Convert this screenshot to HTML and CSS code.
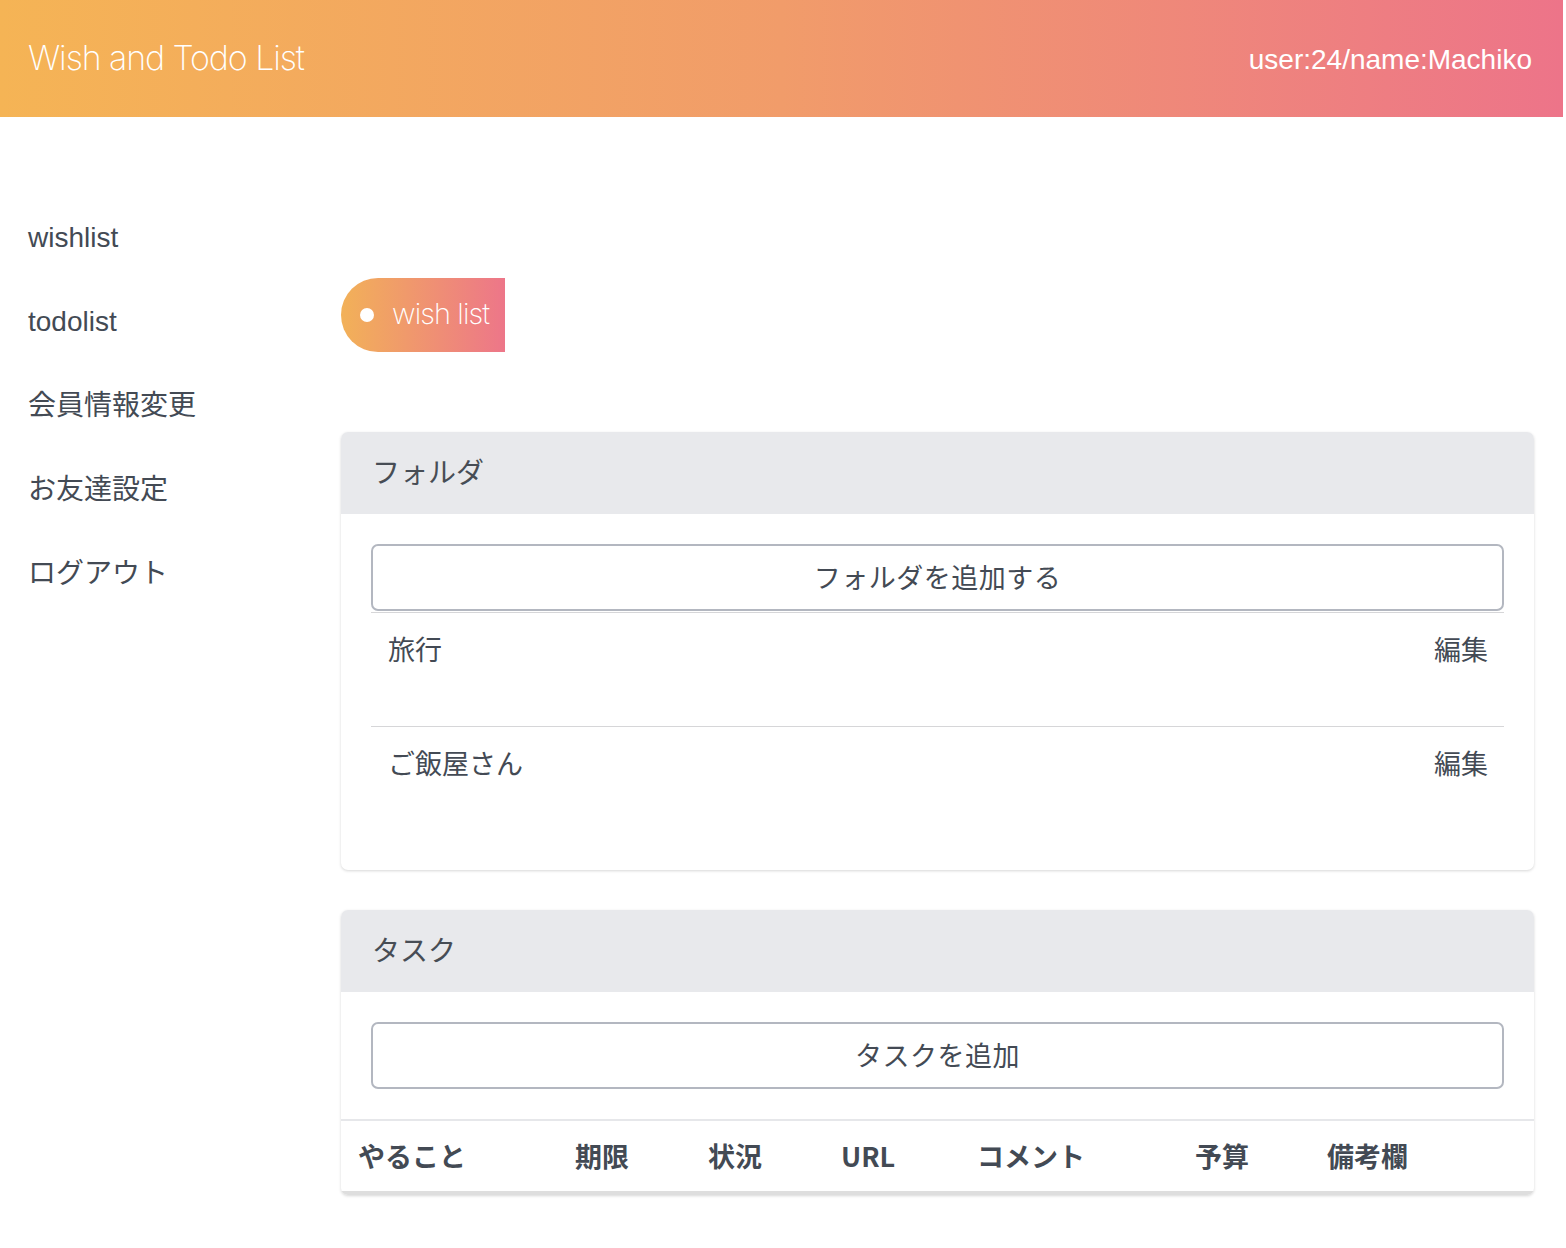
FILE: index.html
```html
<!DOCTYPE html>
<html lang="ja">
<head>
<meta charset="utf-8">
<title>Wish and Todo List</title>
<link rel="stylesheet" href="styles.css">
</head>
<body>
<div class="page">
  <header class="topbar">
    <h1 class="brand">Wish and Todo List</h1>
    <div class="user">user:24/name:Machiko</div>
  </header>
  <div class="layout">
    <nav class="sidebar">
      <a class="nav-item" href="#">wishlist</a>
      <a class="nav-item" href="#">todolist</a>
      <a class="nav-item" href="#">会員情報変更</a>
      <a class="nav-item" href="#">お友達設定</a>
      <a class="nav-item" href="#">ログアウト</a>
    </nav>
    <main class="main">
      <div class="pill"><span class="pill-dot"></span><span class="pill-text">wish list</span></div>

      <section class="card card-folders">
        <div class="card-header">フォルダ</div>
        <div class="card-body">
          <button class="add-btn">フォルダを追加する</button>
          <ul class="folder-list">
            <li class="folder-row"><span>旅行</span><a class="edit" href="#">編集</a></li>
            <li class="folder-row"><span>ご飯屋さん</span><a class="edit" href="#">編集</a></li>
          </ul>
        </div>
      </section>

      <section class="card card-tasks">
        <div class="card-header">タスク</div>
        <div class="card-body task-body">
          <button class="add-btn">タスクを追加</button>
        </div>
        <div class="task-table">
          <div class="th">やること</div>
          <div class="th">期限</div>
          <div class="th">状況</div>
          <div class="th">URL</div>
          <div class="th">コメント</div>
          <div class="th">予算</div>
          <div class="th">備考欄</div>
        </div>
      </section>
    </main>
  </div>
</div>
</body>
</html>
```

FILE: styles.css
```css
html {
  background: #f1f1f1;
}
body {
  margin: 0;
  background: #ffffff;
  font-family: "Liberation Sans", "Noto Sans CJK JP", sans-serif;
  color: #434a54;
}
.page {
  margin-right: 3px;
  background: #ffffff;
  min-height: 1248px;
}
.topbar {
  height: 117px;
  display: flex;
  align-items: center;
  justify-content: space-between;
  padding: 0 31px 0 28px;
  background: linear-gradient(90deg, #f5b455 0%, #f19c6a 50%, #ed7489 100%);
  color: #ffffff;
}
.brand {
  margin: 0;
  font-family: "Inter", "Liberation Sans", sans-serif;
  font-weight: 200;
  font-size: 34px;
  letter-spacing: -1.1px;
  line-height: 1;
  padding-bottom: 2px;
}
.user {
  font-size: 28px;
  line-height: 1;
  padding-top: 2px;
}
.layout {
  display: flex;
}
.sidebar {
  width: 313px;
  padding: 101px 0 0 28px;
  display: flex;
  flex-direction: column;
}
.nav-item {
  display: block;
  height: 84px;
  line-height: 40px;
  font-size: 28px;
  color: #434a54;
  text-decoration: none;
  font-family: "Liberation Sans", "Noto Sans CJK JP", sans-serif;
}
.main {
  flex: 1;
  padding: 161px 29px 40px 0;
  font-family: "Liberation Sans", "Noto Sans CJK JP", sans-serif;
}
.pill {
  display: inline-flex;
  align-items: center;
  height: 74px;
  width: 164px;
  box-sizing: border-box;
  padding-left: 19px;
  border-radius: 37px 0 0 37px;
  background: linear-gradient(90deg, #f2b158 0%, #ed7689 100%);
  color: #ffffff;
}
.pill-dot {
  width: 14px;
  height: 14px;
  border-radius: 50%;
  background: #ffffff;
  margin-right: 18px;
}
.pill-text {
  font-family: "Inter", "Liberation Sans", sans-serif;
  font-weight: 200;
  font-size: 29px;
  letter-spacing: -0.9px;
  line-height: 1;
  padding-bottom: 3px;
}
.card {
  background: #ffffff;
  border-radius: 7px;
  box-shadow: 0 1px 3px rgba(0, 0, 0, 0.16);
  overflow: hidden;
}
.card-folders {
  margin-top: 80px;
}
.card-tasks {
  margin-top: 40px;
}
.card-header {
  height: 82px;
  background: #e8e9ec;
  display: flex;
  align-items: center;
  padding-left: 31px;
  padding-bottom: 4px;
  box-sizing: border-box;
  font-family: "Noto Sans CJK JP", sans-serif;
  font-size: 28px;
  color: #474d55;
}
.card-body {
  padding: 30px;
}
.add-btn {
  display: block;
  width: 100%;
  height: 67px;
  border: 2px solid #b3b7c0;
  border-radius: 7px;
  background: #ffffff;
  font-family: "Noto Sans CJK JP", sans-serif;
  font-size: 27px;
  color: #434a54;
  padding: 0 0 2px 0;
  letter-spacing: 0.5px;
}
.folder-list {
  list-style: none;
  margin: 1px 0 0 0;
  padding: 0;
}
.folder-row {
  box-sizing: border-box;
  display: flex;
  justify-content: space-between;
  align-items: flex-start;
  height: 114px;
  padding: 15px 16px 0 17px;
  border-top: 1px solid #d6d6d8;
  font-family: "Noto Sans CJK JP", sans-serif;
  font-size: 27px;
  line-height: 42px;
  color: #434a54;
}
.edit {
  color: #434a54;
  text-decoration: none;
}
.task-table {
  box-sizing: border-box;
  display: grid;
  grid-template-columns: 217px 133px 133px 136px 218px 132px 1fr;
  padding-left: 17px;
  padding-bottom: 2px;
  height: 76px;
  align-items: center;
  border-top: 2px solid #e6e7ea;
  border-bottom: 4px solid #dedede;
}
.th {
  font-family: "Noto Sans CJK JP", sans-serif;
  font-weight: 700;
  font-size: 27px;
  color: #434a54;
}
```
